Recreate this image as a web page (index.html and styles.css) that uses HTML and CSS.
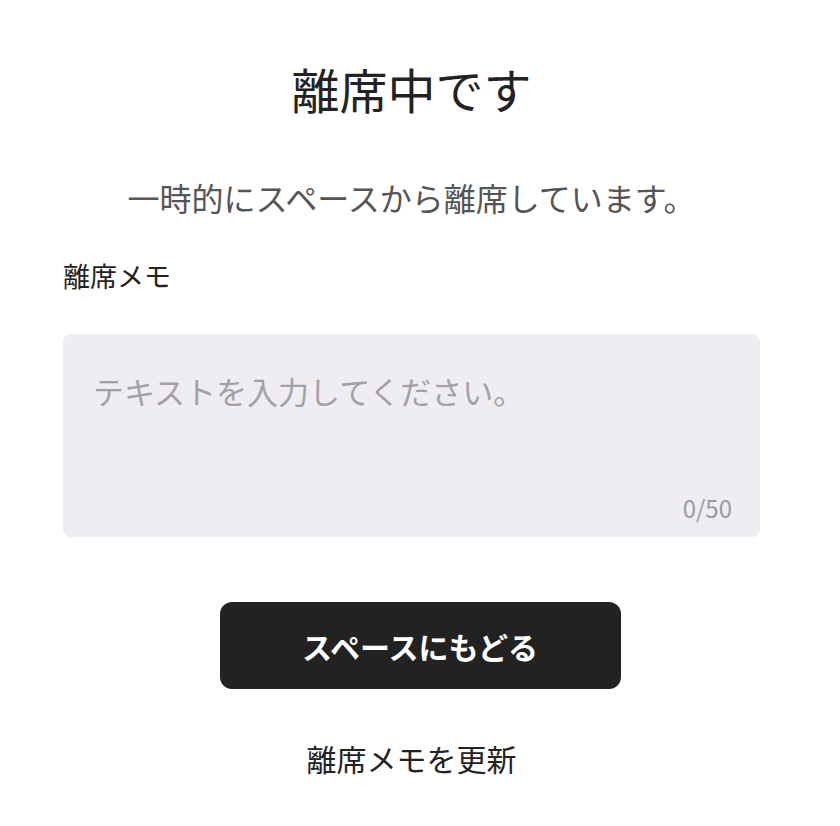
FILE: index.html
```html
<!DOCTYPE html>
<html lang="ja">
<head>
    <meta charset="UTF-8">
    <title>離席中です</title>
    <link rel="stylesheet" href="styles.css">
</head>
<body>
    <div class="away container">
        <h1 class="title">離席中です</h1>
        <p class="lead">一時的にスペースから離席しています。</p>
        <label class="memo">
            <span class="memo-label">離席メモ</span>
            <span class="memo-box">
                <textarea class="memo-input" placeholder="テキストを入力してください。" maxlength="50"></textarea>
                <span class="memo-count">0/50</span>
            </span>
        </label>
        <button class="back-btn">スペースにもどる</button>
        <a class="update-link" href="#">離席メモを更新</a>
    </div>
</body>
</html>
```

FILE: styles.css
```css
* {
    margin: 0;
    padding: 0;
    box-sizing: border-box;
}

body {
    font-family: "Noto Sans CJK JP", "Noto Sans", sans-serif;
    color: #222;
    background-color: #fff;
}

.container {
    width: 697px;
    margin-left: 63px;
}

.away {
    display: flex;
    flex-direction: column;
    align-items: center;
    padding-top: 52px;
}

.title {
    font-size: 48px;
    font-weight: 400;
    line-height: 72px;
}

.lead {
    margin-top: 50px;
    font-size: 32px;
    line-height: 46px;
    color: #555;
}

.memo {
    align-self: stretch;
    display: flex;
    flex-direction: column;
    margin-top: 36px;
}

.memo-label {
    font-size: 27px;
    line-height: 40px;
}

.memo-box {
    position: relative;
    margin-top: 38px;
    height: 203px;
    background-color: #efedf1;
    border-radius: 8px;
}

.memo-input {
    width: 100%;
    height: 100%;
    padding: 34px 30px;
    border: none;
    outline: none;
    resize: none;
    background: transparent;
    font-family: inherit;
    font-size: 31px;
    line-height: 46px;
    color: #222;
}

.memo-input::placeholder {
    color: #a3a1a6;
}

.memo-count {
    position: absolute;
    right: 28px;
    bottom: 12px;
    font-size: 24px;
    color: #9c9a9f;
}

.back-btn {
    margin-top: 65px;
    margin-left: 17px;
    width: 401px;
    height: 87px;
    border: none;
    border-radius: 12px;
    background-color: #222;
    color: #fff;
    font-family: inherit;
    font-size: 30px;
    font-weight: 700;
}

.update-link {
    margin-top: 47px;
    font-size: 30px;
    line-height: 44px;
    color: #222;
    text-decoration: none;
}
```
